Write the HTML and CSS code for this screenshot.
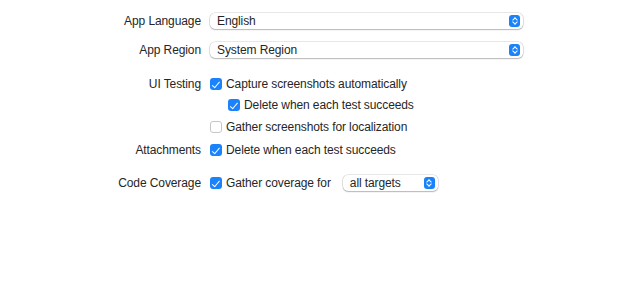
FILE: index.html
```html
<!DOCTYPE html>
<html lang="en">
<head>
	<meta charset="utf-8"/>
	<title>Options</title>
	<link rel="stylesheet" href="styles.css">
</head>
<body>

<main class="options">
	<div class="row row_lang">
		<div class="label">App Language</div>
		<div class="popup wide"><span>English</span><i class="stepper"></i></div>
	</div>
	<div class="row row_region">
		<div class="label">App Region</div>
		<div class="popup wide"><span>System Region</span><i class="stepper"></i></div>
	</div>

	<div class="row row_testing">
		<div class="label">UI Testing</div>
		<div class="check on"></div><span class="text">Capture screenshots automatically</span>
	</div>
	<div class="row row_delete">
		<div class="label"></div>
		<div class="check on indent"></div><span class="text">Delete when each test succeeds</span>
	</div>
	<div class="row row_gather">
		<div class="label"></div>
		<div class="check"></div><span class="text">Gather screenshots for localization</span>
	</div>
	<div class="row row_attach">
		<div class="label">Attachments</div>
		<div class="check on"></div><span class="text">Delete when each test succeeds</span>
	</div>

	<div class="row row_coverage">
		<div class="label">Code Coverage</div>
		<div class="check on"></div><span class="text">Gather coverage for</span>
		<div class="popup small"><span>all targets</span><i class="stepper"></i></div>
	</div>
</main>

</body>
</html>
```

FILE: styles.css
```css
body {
	margin: 0;
	background: #ffffff;
	color: #262626;
	font-family: "Liberation Sans", Arial, sans-serif;
	font-size: 12px;
	letter-spacing: -0.1px;
}
.options {
	padding-top: 12px;
}
.row {
	display: flex;
	align-items: center;
	height: 20px;
}
.label {
	width: 201px;
	margin-right: 9px;
	text-align: right;
	flex: none;
}
.row_lang { height: 18px; }
.row_region { height: 18px; margin-top: 11px; }
.row_testing { margin-top: 15px; }
.row_delete { margin-top: 1px; }
.row_gather { margin-top: 2px; }
.row_attach { margin-top: 3px; }
.row_coverage { margin-top: 13px; }

.popup {
	position: relative;
	height: 16px;
	background: #fff;
	border-radius: 5px;
	box-shadow: 0 0 0 0.5px rgba(0, 0, 0, 0.18), 0 1px 1.5px rgba(0, 0, 0, 0.22);
	display: flex;
	align-items: center;
	justify-content: space-between;
	padding: 0 3px 0 7px;
	box-sizing: border-box;
}
.wide { width: 313px; }
.small { width: 95px; margin-left: 12px; }
.stepper {
	width: 11px;
	height: 12px;
	border-radius: 3px;
	background: #1a82fb;
	position: relative;
}
.stepper::before, .stepper::after {
	content: "";
	position: absolute;
	left: 3.5px;
	width: 3px;
	height: 3px;
	border: solid #fff;
	border-width: 1.3px 0 0 1.3px;
}
.stepper::before {
	top: 2.5px;
	transform: rotate(45deg);
}
.stepper::after {
	top: 5px;
	transform: rotate(225deg);
}

.check {
	width: 12px;
	height: 12px;
	box-sizing: border-box;
	border-radius: 3px;
	border: 1px solid #c6c6c6;
	background: #fff;
	margin-right: 4px;
	flex: none;
	position: relative;
}
.check.on {
	border: none;
	background: #1a82fb;
}
.check.on::after {
	content: "";
	position: absolute;
	left: 4px;
	top: 1.5px;
	width: 3px;
	height: 6.5px;
	border: solid #fff;
	border-width: 0 1.8px 1.8px 0;
	transform: rotate(40deg);
}
.check.indent {
	margin-left: 18px;
}
.text {
	white-space: nowrap;
}
```
